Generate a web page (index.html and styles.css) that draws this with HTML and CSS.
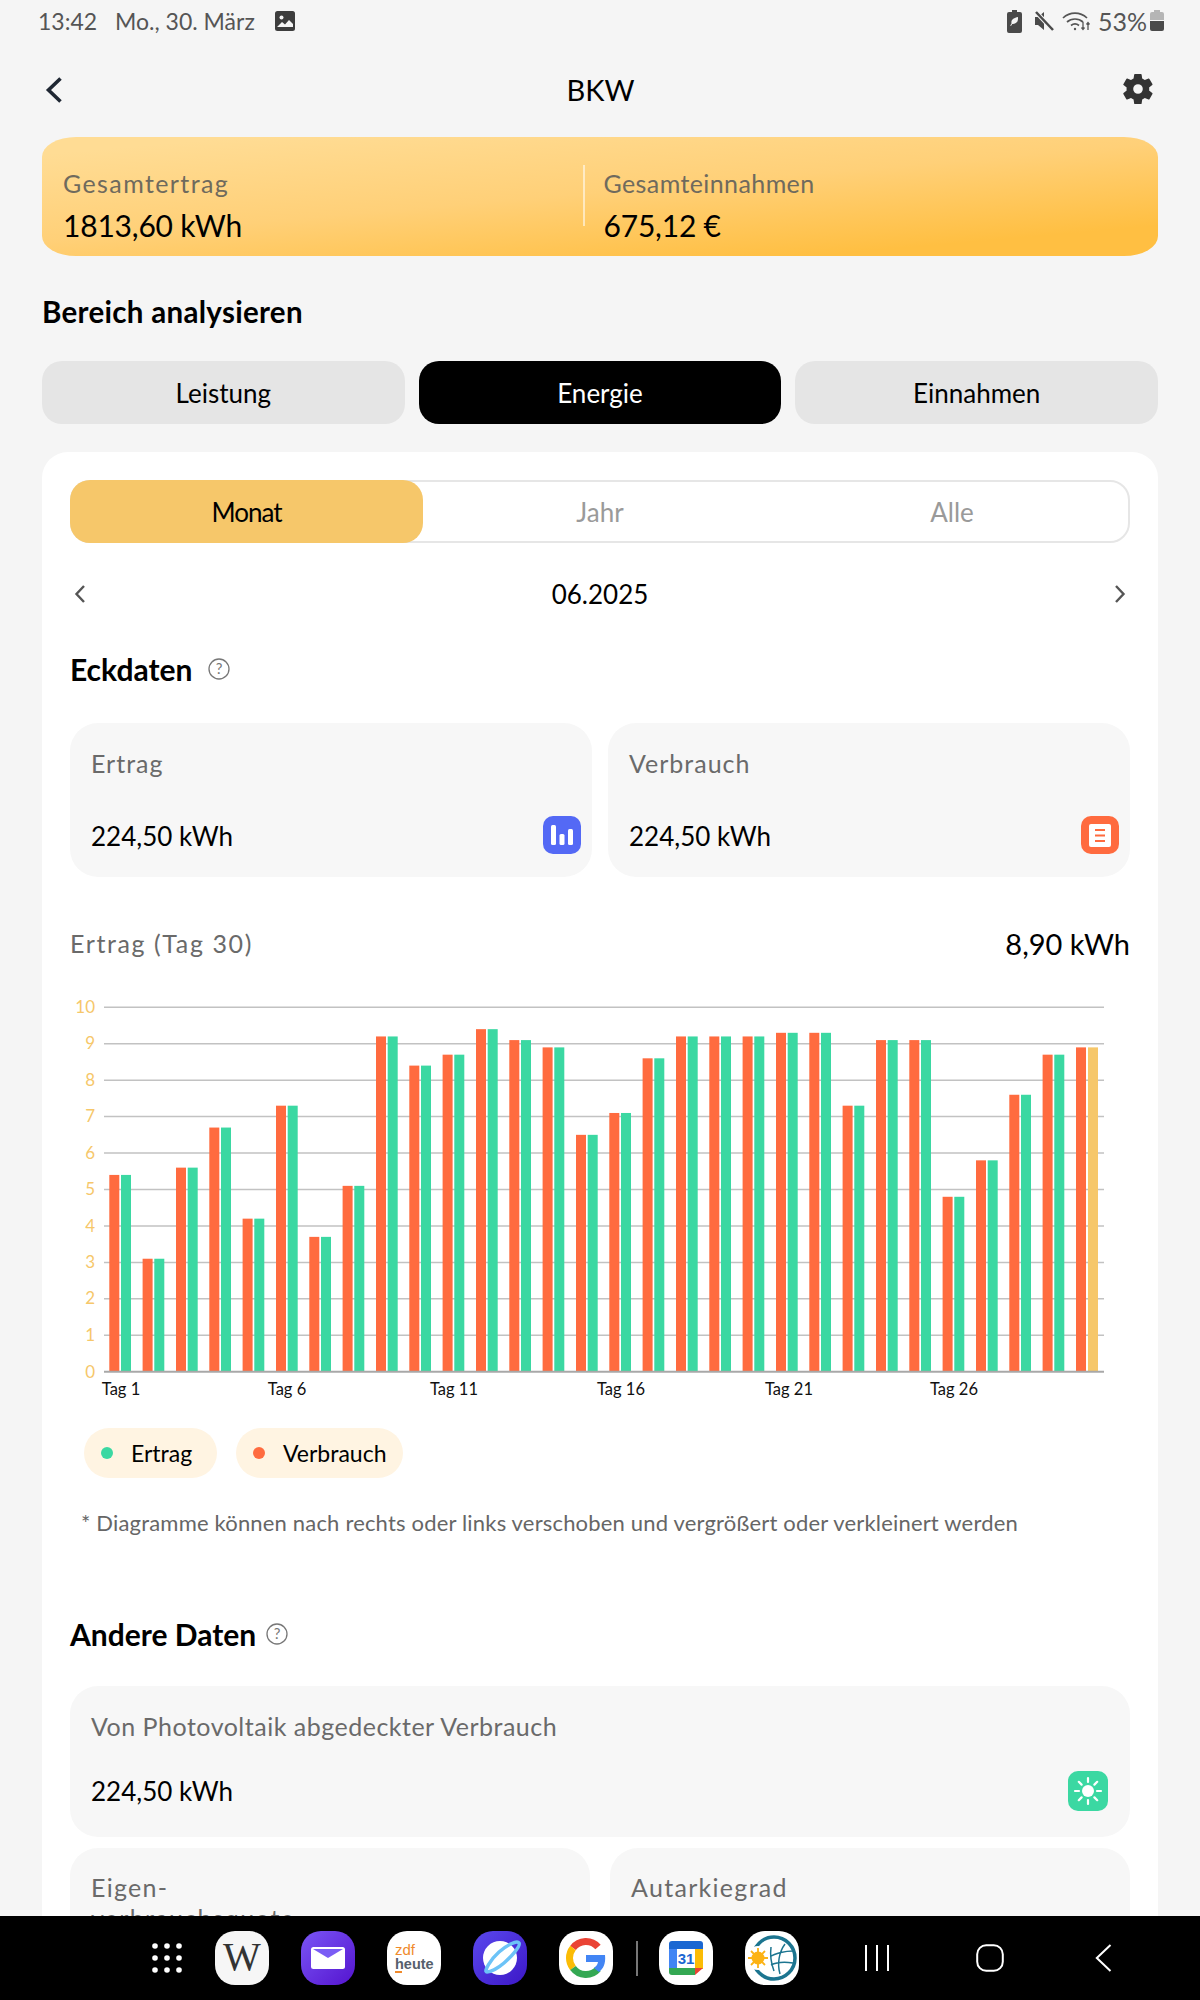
FILE: index.html
```html
<!DOCTYPE html>
<html lang="de">
<head>
<meta charset="utf-8">
<title>BKW</title>
<link rel="stylesheet" href="styles.css">
</head>
<body>
<div class="screen">
  <div class="status">
    <span class="st-time">13:42</span>
    <span class="st-date">Mo., 30. März</span>
    <svg class="st-img" viewBox="0 0 20 20"><rect width="20" height="20" rx="2.5" fill="#3d3d3d"/><circle cx="6.5" cy="6.5" r="2" fill="#f5f5f5"/><path d="M2 16l5-5 3 2.5 4-4.5 4 4v3z" fill="#f5f5f5"/></svg>
    <span class="st-spacer"></span>
    <svg class="st-bat-leaf" viewBox="0 0 15 23"><path d="M5 0h5v2h3a2 2 0 0 1 2 2v17a2 2 0 0 1-2 2H2a2 2 0 0 1-2-2V4a2 2 0 0 1 2-2h3z" fill="#4a4a4a"/><path d="M11 7c.3 4.500-1.500 7-5 7-.3 0-.6 0-.8-.1L4 16l-.8-.6 1.300-2C3.800 9.500 7 8 11 7z" fill="#f5f5f5"/></svg>
    <svg class="st-mute" viewBox="0 0 22 20"><path d="M2 6h3l6-5v18l-6-5H2z" fill="#4a4a4a"/><path d="M3 1l17 18" stroke="#f5f5f5" stroke-width="4.500"/><path d="M3 1l17 18" stroke="#4a4a4a" stroke-width="2.500"/></svg>
    <svg class="st-wifi" viewBox="0 0 30 21" fill="none" stroke="#555" stroke-width="1.700"><path d="M1 7c7-6.500 17-6.500 24 0"/><path d="M5 11c4.500-4 11.500-4 16 0"/><path d="M9 14.500c2.500-2 5.500-2 8 0"/><circle cx="13" cy="18" r="1.200" fill="#555" stroke="none"/><path d="M21 11v7M19.500 16.500l1.500 2 1.500-2M26 19v-7M24.500 13.500l1.500-2 1.500 2" stroke-width="1.300"/></svg>
    <span class="st-pct">53%</span>
    <svg class="st-bat" viewBox="0 0 14 21"><path d="M4 0h6v2h2a2 2 0 0 1 2 2v6H0V4a2 2 0 0 1 2-2h2z" fill="#b5b5b5"/><path d="M0 11h14v8a2 2 0 0 1-2 2H2a2 2 0 0 1-2-2z" fill="#4a4a4a"/></svg>
  </div>

  <header class="topbar">
    <svg class="back" viewBox="0 0 18 28" fill="none"><path d="M15.500 2.500L3.500 14l12 11.500" stroke="#1f2733" stroke-width="3.600"/></svg>
    <h1 class="title">BKW</h1>
    <svg class="gear" viewBox="0 0 24 24"><path fill="#333" d="M19.400 13c.05-.33.08-.66.08-1s-.03-.67-.08-1l2.100-1.650a.5.5 0 0 0 .12-.64l-2-3.460a.5.500 0 0 0-.61-.22l-2.490 1a7.300 7.300 0 0 0-1.730-1l-.38-2.650A.49.49 0 0 0 13.930 2h-4a.49.49 0 0 0-.49.42l-.38 2.650a7.700 7.700 0 0 0-1.730 1l-2.490-1a.5.5 0 0 0-.61.22l-2 3.460a.49.49 0 0 0 .12.64L4.450 11c-.05.33-.08.67-.08 1s.03.67.08 1l-2.100 1.650a.5.5 0 0 0-.12.64l2 3.460c.12.22.39.3.61.22l2.490-1c.52.4 1.100.73 1.730 1l.38 2.650c.03.24.24.42.49.42h4c.25 0 .46-.18.49-.42l.38-2.650a7.700 7.700 0 0 0 1.730-1l2.490 1c.23.08.49 0 .61-.22l2-3.460a.5.5 0 0 0-.12-.64zM12 15.200a3.200 3.200 0 1 1 0-6.400 3.200 3.200 0 0 1 0 6.400z"/></svg>
  </header>

  <section class="hero">
    <div class="hero-col hero-col-left">
      <div class="hero-label hero-label-a">Gesamtertrag</div>
      <div class="hero-value">1813,60 kWh</div>
    </div>
    <div class="hero-rule"></div>
    <div class="hero-col hero-col-right">
      <div class="hero-label">Gesamteinnahmen</div>
      <div class="hero-value">675,12 €</div>
    </div>
  </section>

  <h2 class="area-title">Bereich analysieren</h2>

  <nav class="tabs">
    <div class="tab">Leistung</div>
    <div class="tab tab-on">Energie</div>
    <div class="tab">Einnahmen</div>
  </nav>

  <main class="card">
    <div class="seg">
      <div class="seg-item seg-on">Monat</div>
      <div class="seg-item">Jahr</div>
      <div class="seg-item">Alle</div>
    </div>

    <div class="date-row">
      <svg class="date-arrow" viewBox="0 0 12 20" fill="none"><path d="M10 2L2.500 10l7.500 8" stroke="#555" stroke-width="2.400"/></svg>
      <span class="date">06.2025</span>
      <svg class="date-arrow" viewBox="0 0 12 20" fill="none"><path d="M2 2l7.500 8L2 18" stroke="#555" stroke-width="2.400"/></svg>
    </div>

    <div class="sec-head">
      <h3 class="sec-title">Eckdaten</h3>
      <svg class="help" viewBox="0 0 22 22"><circle cx="11" cy="11" r="10" fill="none" stroke="#777" stroke-width="1.300"/><text x="11" y="16" class="help-q">?</text></svg>
    </div>

    <div class="stat-grid">
      <div class="stat">
        <div class="stat-label stat-label-loose">Ertrag</div>
        <div class="stat-row">
          <span class="stat-value">224,50 kWh</span>
          <svg class="stat-icon" viewBox="0 0 38 38"><rect width="38" height="38" rx="10" fill="#5469f5"/><rect x="8" y="9" width="5" height="20" rx="1.500" fill="#fff"/><rect x="16.500" y="18" width="5" height="11" rx="1.500" fill="#fff"/><rect x="25" y="13" width="5" height="16" rx="1.500" fill="#fff"/></svg>
        </div>
      </div>
      <div class="stat">
        <div class="stat-label stat-label-loose">Verbrauch</div>
        <div class="stat-row">
          <span class="stat-value">224,50 kWh</span>
          <svg class="stat-icon" viewBox="0 0 38 38"><rect width="38" height="38" rx="10" fill="#ff6b3f"/><rect x="8" y="8" width="22" height="23" rx="2" fill="#fff"/><path d="M14 14h10M14 19.500h10M14 25h10" stroke="#ff6b3f" stroke-width="2.200"/></svg>
        </div>
      </div>
    </div>

    <div class="chart-head">
      <span class="chart-label">Ertrag (Tag 30)</span>
      <span class="chart-value">8,90 kWh</span>
    </div>

    <svg class="chart" viewBox="0 0 1060 410">
      <g class="grid">
        <path d="M34 17.300H1034M34 53.700H1034M34 90.200H1034M34 126.600H1034M34 163.100H1034M34 199.500H1034M34 236H1034M34 272.400H1034M34 308.800H1034M34 345.300H1034"/>
      </g>
      <g class="ylab">
        <text x="25" y="23">10</text><text x="25" y="59">9</text><text x="25" y="96">8</text><text x="25" y="132">7</text><text x="25" y="169">6</text><text x="25" y="205">5</text><text x="25" y="242">4</text><text x="25" y="278">3</text><text x="25" y="314">2</text><text x="25" y="351">1</text><text x="25" y="388">0</text>
      </g>
      <g transform="translate(34 381.700) scale(1 -36.440)">
        <g class="bar-o">
          <rect x="5.300" width="10" height="5.400"/><rect x="38.600" width="10" height="3.100"/><rect x="72" width="10" height="5.600"/><rect x="105.300" width="10" height="6.700"/><rect x="138.600" width="10" height="4.200"/><rect x="172" width="10" height="7.300"/><rect x="205.300" width="10" height="3.700"/><rect x="238.600" width="10" height="5.100"/><rect x="272" width="10" height="9.200"/><rect x="305.300" width="10" height="8.400"/><rect x="338.600" width="10" height="8.700"/><rect x="372" width="10" height="9.400"/><rect x="405.300" width="10" height="9.100"/><rect x="438.600" width="10" height="8.900"/><rect x="472" width="10" height="6.500"/><rect x="505.300" width="10" height="7.100"/><rect x="538.600" width="10" height="8.600"/><rect x="572" width="10" height="9.200"/><rect x="605.300" width="10" height="9.200"/><rect x="638.600" width="10" height="9.200"/><rect x="672" width="10" height="9.300"/><rect x="705.300" width="10" height="9.300"/><rect x="738.600" width="10" height="7.300"/><rect x="772" width="10" height="9.100"/><rect x="805.300" width="10" height="9.100"/><rect x="838.600" width="10" height="4.800"/><rect x="872" width="10" height="5.800"/><rect x="905.300" width="10" height="7.600"/><rect x="938.600" width="10" height="8.700"/><rect x="972" width="10" height="8.900"/>
        </g>
        <g class="bar-g">
          <rect x="17" width="10" height="5.400"/><rect x="50.300" width="10" height="3.100"/><rect x="83.700" width="10" height="5.600"/><rect x="117" width="10" height="6.700"/><rect x="150.300" width="10" height="4.200"/><rect x="183.700" width="10" height="7.300"/><rect x="217" width="10" height="3.700"/><rect x="250.300" width="10" height="5.100"/><rect x="283.700" width="10" height="9.200"/><rect x="317" width="10" height="8.400"/><rect x="350.300" width="10" height="8.700"/><rect x="383.700" width="10" height="9.400"/><rect x="417" width="10" height="9.100"/><rect x="450.300" width="10" height="8.900"/><rect x="483.700" width="10" height="6.500"/><rect x="517" width="10" height="7.100"/><rect x="550.300" width="10" height="8.600"/><rect x="583.700" width="10" height="9.200"/><rect x="617" width="10" height="9.200"/><rect x="650.300" width="10" height="9.200"/><rect x="683.700" width="10" height="9.300"/><rect x="717" width="10" height="9.300"/><rect x="750.300" width="10" height="7.300"/><rect x="783.700" width="10" height="9.100"/><rect x="817" width="10" height="9.100"/><rect x="850.300" width="10" height="4.800"/><rect x="883.700" width="10" height="5.800"/><rect x="917" width="10" height="7.600"/><rect x="950.300" width="10" height="8.700"/>
          <rect class="bar-y" x="984" width="10" height="8.900"/>
        </g>
      </g>
      <path class="axis" d="M34 381.700H1034"/>
      <g class="xlab">
        <text x="51" y="405">Tag 1</text><text x="217" y="405">Tag 6</text><text x="384" y="405">Tag 11</text><text x="551" y="405">Tag 16</text><text x="719" y="405">Tag 21</text><text x="884" y="405">Tag 26</text>
      </g>
    </svg>

    <div class="legend">
      <div class="chip chip-a"><span class="dot dot-g"></span><span>Ertrag</span></div>
      <div class="chip chip-b"><span class="dot dot-o"></span><span>Verbrauch</span></div>
    </div>

    <p class="note">* Diagramme können nach rechts oder links verschoben und vergrößert oder verkleinert werden</p>

    <div class="sec-head sec-head-2">
      <h3 class="sec-title">Andere Daten</h3>
      <svg class="help" viewBox="0 0 22 22"><circle cx="11" cy="11" r="10" fill="none" stroke="#777" stroke-width="1.300"/><text x="11" y="16" class="help-q">?</text></svg>
    </div>

    <div class="stat stat-wide">
      <div class="stat-label">Von Photovoltaik abgedeckter Verbrauch</div>
      <div class="stat-row">
        <span class="stat-value">224,50 kWh</span>
        <svg class="stat-icon icon-sun" viewBox="0 0 40 40"><rect width="40" height="40" rx="10" fill="#3bd8a2"/><circle cx="20" cy="20" r="6" fill="#fff"/><path d="M20 7v4M20 29v4M7 20h4M29 20h4M10.800 10.800l2.800 2.800M26.400 26.400l2.800 2.800M29.200 10.800l-2.800 2.800M13.600 26.400l-2.800 2.800" stroke="#fff" stroke-width="2.200" stroke-linecap="round"/></svg>
      </div>
    </div>

    <div class="stat-grid stat-grid-low">
      <div class="stat stat-tall">
        <div class="stat-label stat-label-wrap">Eigen-<br>verbrauchsquote</div>
      </div>
      <div class="stat stat-tall">
        <div class="stat-label stat-label-wrap">Autarkiegrad</div>
      </div>
    </div>
  </main>

  <footer class="navbar">
    <svg class="nav-apps" viewBox="0 0 30 30"><g fill="#fff"><circle cx="3" cy="3" r="2.800"/><circle cx="15" cy="3" r="2.800"/><circle cx="27" cy="3" r="2.800"/><circle cx="3" cy="15" r="2.800"/><circle cx="15" cy="15" r="2.800"/><circle cx="27" cy="15" r="2.800"/><circle cx="3" cy="27" r="2.800"/><circle cx="15" cy="27" r="2.800"/><circle cx="27" cy="27" r="2.800"/></g></svg>

    <div class="apps apps-first">
      <svg class="app" viewBox="0 0 54 54"><rect width="54" height="54" rx="20" fill="#f6f6f6"/><text x="27" y="39" class="app-w">W</text></svg>
      <svg class="app" viewBox="0 0 54 54"><defs><linearGradient id="gm" x1="0" y1="0" x2="1" y2="1"><stop offset="0" stop-color="#7a55f5"/><stop offset="1" stop-color="#5414cf"/></linearGradient></defs><rect width="54" height="54" rx="20" fill="url(#gm)"/><rect x="10" y="16" width="34" height="22" rx="2.500" fill="#fff"/><path d="M12 18h30L27 27z" fill="#7a5cf5"/></svg>
      <svg class="app" viewBox="0 0 54 54"><rect width="54" height="54" rx="20" fill="#fff"/><text x="8" y="24" class="app-zdf">zdf</text><text x="8" y="38" class="app-heute">heute</text><rect x="8" y="40" width="7" height="2" fill="#f08a2c"/></svg>
      <svg class="app" viewBox="0 0 54 54"><defs><linearGradient id="gp" x1="0" y1="0" x2="1" y2="1"><stop offset="0" stop-color="#5a48ee"/><stop offset="1" stop-color="#3c17c6"/></linearGradient></defs><rect width="54" height="54" rx="20" fill="url(#gp)"/><circle cx="27" cy="27" r="17" fill="#fff"/><path d="M14 41C10 41 18 28 26 21s18-12 20-9-8 14-15 20-14 9-17 9z" fill="none" stroke="#6cc3f7" stroke-width="3.500"/></svg>
      <svg class="app" viewBox="0 0 54 54"><rect width="54" height="54" rx="20" fill="#fff"/><g fill="none" stroke-width="7"><path d="M39 16A16 16 0 0 0 14 17" stroke="#ea4335"/><path d="M14 17a16 16 0 0 0 0 20" stroke="#fbbc05"/><path d="M14 37a16 16 0 0 0 25 1" stroke="#34a853"/></g><path d="M27 24h19c1 9-2 14-6 17l-5-4c2-1.500 3.500-3 4-6H27z" fill="#4285f4"/></svg>
    </div>

    <span class="nav-sep"></span>

    <div class="apps">
      <svg class="app" viewBox="0 0 54 54"><rect width="54" height="54" rx="20" fill="#fff"/><path d="M13 10h28a3 3 0 0 1 3 3v5H10v-5a3 3 0 0 1 3-3z" fill="#1a67d2"/><rect x="10" y="18" width="8" height="20" fill="#4285f4"/><rect x="36" y="18" width="8" height="20" fill="#fbbc05"/><path d="M10 37h26v7H13a3 3 0 0 1-3-3z" fill="#34a853"/><path d="M36 37h8l-8 7z" fill="#ea4335"/><rect x="18" y="18" width="18" height="19" fill="#fff"/><text x="27" y="33" class="app-cal">31</text></svg>
      <svg class="app" viewBox="0 0 54 54"><rect width="54" height="54" rx="20" fill="#fff"/><circle cx="29" cy="27" r="21" fill="none" stroke="#1c7590" stroke-width="3.500"/><path d="M40 13c-6 8-8 20-5 30M48 20c-7 0-18 2-23 6M48 32c-7-1-16-1-22 2M26 16c-1 8 0 16 3 24" fill="none" stroke="#1c7590" stroke-width="1.500"/><circle cx="13" cy="27" r="12" fill="#fff"/><circle cx="13" cy="27" r="6.500" fill="#fcb315"/><path d="M13 17v20M3 27h20M6 20l14 14M20 20L6 34" stroke="#fcb315" stroke-width="1.800"/></svg>
    </div>

    <div class="softkeys">
      <svg class="key-recent" viewBox="0 0 26 28" fill="none" stroke="#fff" stroke-width="2"><path d="M2 1v26M13 1v26M24 1v26"/></svg>
      <svg class="key-home" viewBox="0 0 28 28" fill="none"><rect x="1.200" y="1.200" width="25.600" height="25.600" rx="9" stroke="#fff" stroke-width="2"/></svg>
      <svg class="key-back" viewBox="0 0 17 28" fill="none"><path d="M15.500 1L1.800 14l13.700 13" stroke="#fff" stroke-width="2"/></svg>
    </div>
  </footer>
</div>
</body>
</html>
```

FILE: styles.css
```css
* { box-sizing: border-box; }
html, body { margin: 0; padding: 0; }
body { background: #f5f5f5; font-family: "Lato", "Noto Sans", sans-serif; color: #000; }
h1, h2, h3, p { margin: 0; font-weight: 400; }
svg { display: block; flex: none; }

.screen { position: relative; width: 1200px; height: 2000px; overflow: hidden; background: #f5f5f5; }

/* status bar */
.status { height: 42px; display: flex; align-items: center; padding: 0 36px 0 38px; color: #555; font-size: 23px; }
.st-time { width: 77px; }
.st-date { width: 160px; }
.st-img { width: 20px; height: 20px; }
.st-spacer { flex: 1; }
.st-bat-leaf { width: 15px; height: 23px; }
.st-mute { width: 22px; height: 20px; margin-left: 11px; }
.st-wifi { width: 30px; height: 21px; margin-left: 7px; }
.st-pct { margin-left: 6px; width: 47px; font-size: 25px; }
.st-bat { width: 14px; height: 21px; margin-left: 5px; margin-top: -2px; }

/* top bar */
.topbar { height: 95px; display: grid; grid-template-columns: 1fr auto 1fr; align-items: center; padding: 0 44px 0 45px; }
.back { width: 18px; height: 28px; }
.title { font-size: 29px; line-height: 40px; }
.gear { width: 36px; height: 36px; justify-self: end; margin-top: -2px; }

/* hero */
.hero { height: 119px; margin: 0 42px; display: flex; align-items: stretch; background: linear-gradient(175deg, #ffdc94 8%, #ffd078 48%, #ffbf42 86%); border-radius: 34px / 20px; }
.hero-col { padding-top: 28px; }
.hero-col-left { width: 541px; padding-left: 21px; }
.hero-col-right { flex: 1; padding-left: 19px; }
.hero-label { font-size: 25px; line-height: 36px; color: #6f6a5d; letter-spacing: 0.400px; }
.hero-label-a { letter-spacing: 1.400px; }
.hero-value { margin-top: 3px; font-size: 30px; line-height: 42px; letter-spacing: -0.200px; }
.hero-rule { width: 1.500px; height: 61px; margin-top: 28px; background: rgba(255, 255, 255, 0.55); }

.area-title { margin: 36px 42px 0; font-size: 29.500px; line-height: 40px; font-weight: 700; letter-spacing: 0.300px; }

/* tabs */
.tabs { margin: 29px 42px 0; display: grid; grid-template-columns: 1fr 1fr 1fr; gap: 14px; }
.tab { height: 63px; border-radius: 20px; background: #e5e5e5; display: flex; align-items: center; justify-content: center; font-size: 26px; }
.tab-on { background: #000; color: #fff; }

/* main card */
.card { margin: 28px 42px 0; padding: 28px 28px 0; background: #fff; border-radius: 26px; height: 1600px; }

.seg { height: 63px; display: grid; grid-template-columns: 1fr 1fr 1fr; border: 2px solid #e6e6e6; border-radius: 20px; }
.seg-item { display: flex; align-items: center; justify-content: center; font-size: 26px; color: #9a9a9a; }
.seg-on { margin: -2px 1px -2px -2px; background: #f6c76a; color: #000; border-radius: 20px; letter-spacing: -1px; }

.date-row { height: 40px; margin-top: 31px; padding: 0 4px; display: flex; align-items: center; justify-content: space-between; }
.date-arrow { width: 12px; height: 20px; }
.date { font-size: 26px; }

.sec-head { height: 40px; margin-top: 35px; display: flex; align-items: center; gap: 16px; }
.sec-head-2 { margin-top: 76px; gap: 10px; }
.sec-title { font-size: 30px; line-height: 40px; font-weight: 700; }
.help { width: 22px; height: 22px; }
.help-q { font-size: 15px; fill: #777; text-anchor: middle; }

.stat-grid { margin-top: 34px; display: grid; grid-template-columns: 1fr 1fr; gap: 16px; }
.stat { height: 154px; background: #f7f7f7; border-radius: 28px; padding: 20px 11px 0 21px; }
.stat-label { font-size: 25px; line-height: 40px; color: #6a6a6a; letter-spacing: 0.500px; }
.stat-label-loose { letter-spacing: 1px; }
.stat-row { margin-top: 33px; height: 40px; display: flex; align-items: center; justify-content: space-between; }
.stat-value { font-size: 26px; }
.stat-icon { width: 38px; height: 38px; margin-top: -2px; }

.chart-head { margin-top: 46px; height: 40px; display: flex; align-items: center; justify-content: space-between; }
.chart-label { font-size: 25px; color: #6a6a6a; letter-spacing: 1.600px; }
.chart-value { font-size: 29px; }

.chart { margin-top: 27px; width: 1060px; height: 410px; }
.grid path { stroke: #c2c2c2; stroke-width: 1.500; fill: none; }
.axis { stroke: #a8a8a8; stroke-width: 2; fill: none; }
.ylab text { font-size: 17px; fill: #f6c76a; text-anchor: end; }
.xlab text { font-size: 16.500px; fill: #111; text-anchor: middle; }
.bar-o { fill: #ff6b3f; }
.bar-g { fill: #3bd8a2; }
.bar-y { fill: #f6c76a; }

.legend { margin-top: 28px; padding-left: 14px; display: flex; gap: 19px; }
.chip { height: 50px; border-radius: 25px; background: #fff4e2; display: flex; align-items: center; gap: 18px; padding-left: 17px; font-size: 23px; }
.chip-a { width: 133px; }
.chip-b { width: 167px; }
.dot { width: 12px; height: 12px; border-radius: 50%; }
.dot-g { background: #3bd8a2; }
.dot-o { background: #ff6b3f; }

.note { margin-top: 30px; padding-left: 11px; font-size: 22px; line-height: 30px; color: #666; letter-spacing: 0.180px; white-space: nowrap; }

.stat-wide { margin-top: 32px; height: 151px; padding: 20px 22px 0 21px; }
.stat-wide .stat-row { margin-top: 25px; }
.icon-sun { width: 40px; height: 40px; margin-top: 0; }

.stat-grid-low { margin-top: 11px; gap: 20px; }
.stat-tall { height: 160px; padding-top: 24px; }
.stat-label-wrap { line-height: 31px; letter-spacing: 1.300px; }

/* system nav bar, painted over the scrolling page */
.navbar { position: absolute; left: 0; right: 0; bottom: 0; height: 84px; background: #000; display: flex; align-items: center; padding: 0 0 0 152px; }
.nav-apps { width: 30px; height: 30px; }
.apps { display: flex; gap: 32px; }
.apps-first { margin-left: 33px; }
.app { width: 54px; height: 54px; }
.app-w { font-family: "Liberation Serif", serif; font-size: 40px; fill: #333; text-anchor: middle; }
.app-zdf { font-family: "Liberation Sans", sans-serif; font-size: 15px; fill: #f08a2c; }
.app-heute { font-family: "Liberation Sans", sans-serif; font-size: 14.500px; font-weight: 700; fill: #56606c; }
.app-cal { font-family: "Liberation Sans", sans-serif; font-size: 15px; font-weight: 700; fill: #1a67d2; text-anchor: middle; }
.nav-sep { width: 1.500px; height: 35px; background: #777; margin: 0 21px 0 23px; }
.softkeys { display: flex; align-items: center; }
.key-recent { width: 26px; height: 28px; margin-left: 65px; }
.key-home { width: 28px; height: 28px; margin-left: 86px; }
.key-back { width: 17px; height: 28px; margin-left: 91px; }
```
